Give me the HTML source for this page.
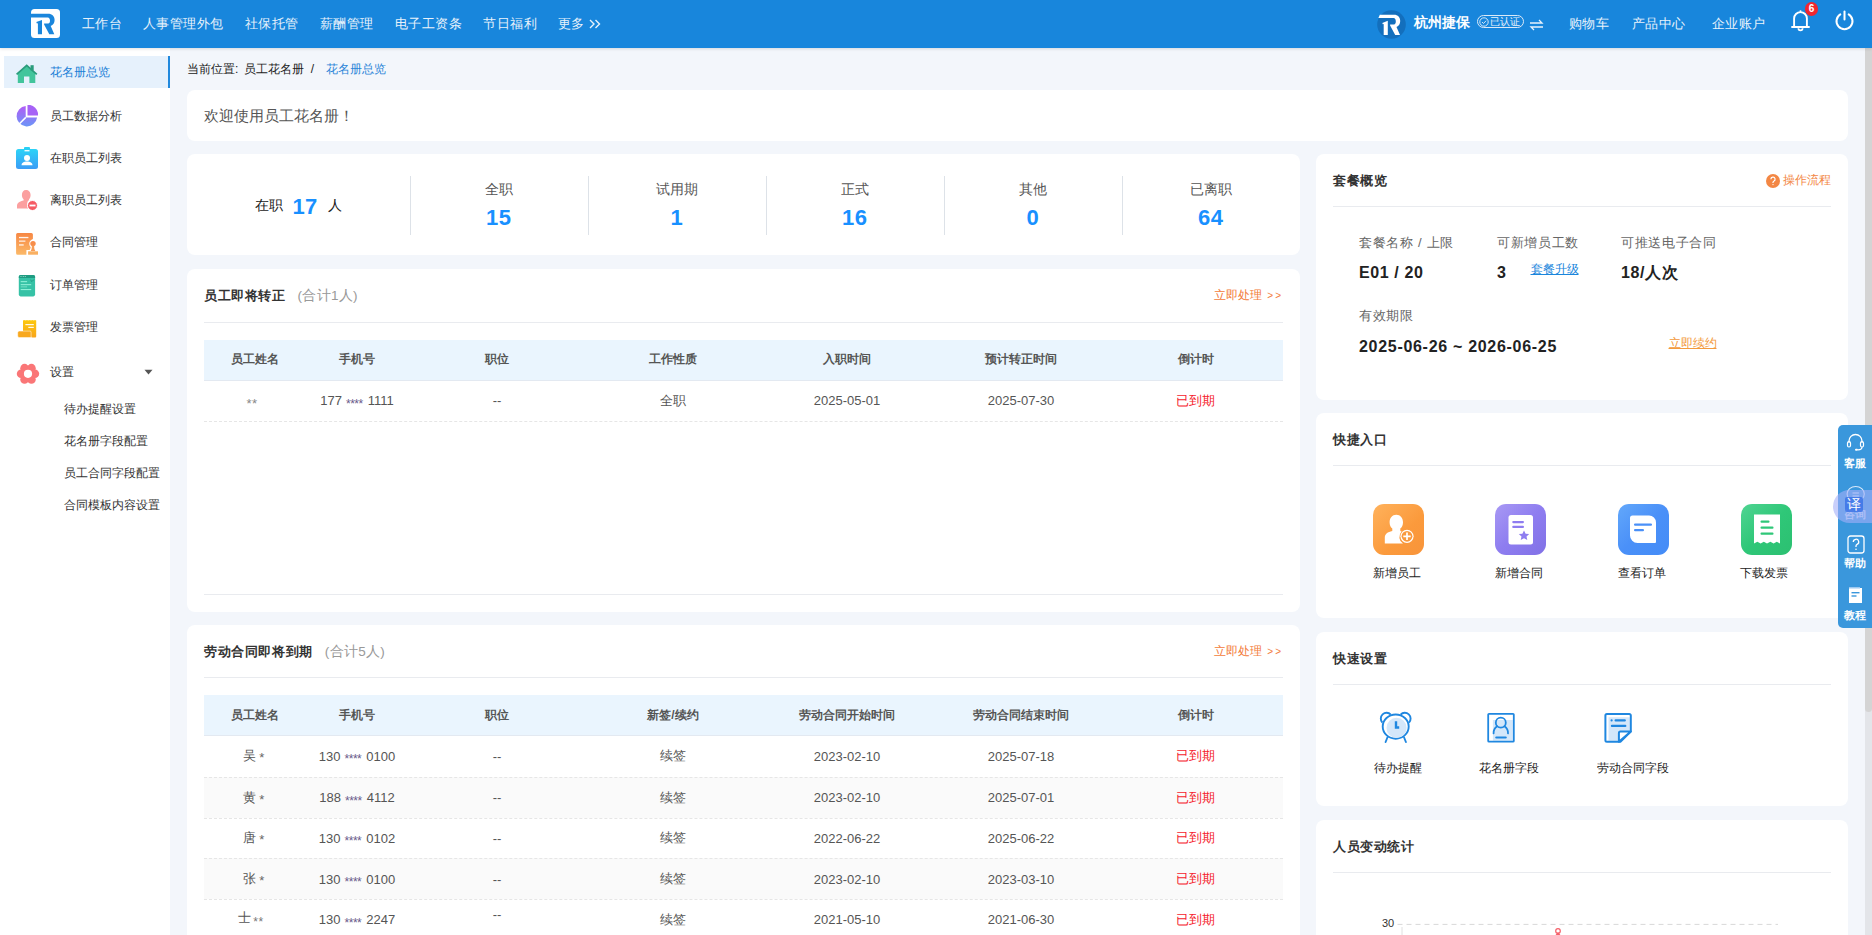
<!DOCTYPE html><html><head><meta charset="utf-8"><style>
*{box-sizing:border-box;margin:0;padding:0}
html,body{width:1872px;height:935px;overflow:hidden}
body{font-family:"Liberation Sans",sans-serif;background:#f3f6fb;position:relative;color:#333}
.abs{position:absolute}
.t{position:absolute;white-space:nowrap}
#hdr{position:absolute;left:0;top:0;width:1872px;height:48px;background:#1886dc;color:#fff;box-shadow:0 1px 3px rgba(0,0,0,0.12);z-index:5}
#hdr .nav{position:absolute;top:0;height:48px;line-height:47px;font-size:13px;letter-spacing:0.6px;white-space:nowrap;color:#e8f2fb}
#side{position:absolute;left:0;top:48px;width:170px;height:887px;background:#fff}
.mi{position:absolute;left:4px;width:166px;height:32px;font-size:12px;color:#333;line-height:32px}
.mi svg{position:absolute;left:12px;top:5px}
.mi .tx{position:absolute;left:46px;top:0}
.mi.act{background:#e6f1fc;color:#1b7fd6}
.mi.act:after{content:"";position:absolute;right:0;top:0;width:2px;height:32px;background:#2189dd}
.sub{position:absolute;left:64px;font-size:12px;color:#333;line-height:20px;white-space:nowrap}
.card{position:absolute;background:#fff;border-radius:8px;overflow:hidden}
.ttl{position:absolute;left:17px;font-size:13px;font-weight:bold;color:#333;line-height:20px;white-space:nowrap;letter-spacing:0.6px;margin-top:1px}
.ttl .cnt{font-weight:normal;color:#999;margin-left:12px;font-size:13.5px;letter-spacing:0.3px}
.dv{position:absolute;left:17px;right:17px;height:1px;background:#e9ebef}
.more{position:absolute;right:17px;font-size:12px;color:#f37b3a;line-height:20px;white-space:nowrap}
.tbl{position:absolute;left:17px;width:1079px}
.th{position:absolute;left:0;width:1079px;height:40.5px;background:#eaf5fe;border-bottom:1px solid #e3e9f1}
.tr{position:absolute;left:0;width:1079px;height:41.25px;border-bottom:1px dashed #e6e6e6}
.tr.alt{background:#fafafa}
.c{position:absolute;top:0;height:100%;display:flex;align-items:center;justify-content:center;font-size:13px;color:#555;white-space:nowrap}
.th .c{font-weight:bold;color:#555;font-size:12px}
.red{color:#f5222d!important}
.stat{position:absolute;top:0;height:101px}
.sdiv{position:absolute;top:22px;width:1px;height:59px;background:#dde2e8}
.slab{position:absolute;left:0;right:0;text-align:center;font-size:13.5px;color:#555;top:25.5px;line-height:20px}
.snum{position:absolute;left:0;right:0;text-align:center;font-size:22px;letter-spacing:0.3px;text-indent:0.3px;font-weight:bold;color:#1890ff;top:50.5px;line-height:26px}
.lab{position:absolute;font-size:13px;color:#666;line-height:20px;white-space:nowrap;letter-spacing:0.7px;margin-top:1.5px}
.val{position:absolute;font-size:16px;font-weight:bold;color:#222;line-height:22px;white-space:nowrap;letter-spacing:0.6px;margin-top:1.5px}
.qi{position:absolute;width:51px;height:51px;border-radius:11px}
.ql{position:absolute;font-size:12px;color:#222;line-height:20px;white-space:nowrap;text-align:center;width:100px}
#sb{position:absolute;left:1865px;top:48px;width:7px;height:887px;background:#e3e5e9}
#sbt{position:absolute;left:1865px;top:48px;width:7px;height:664px;background:#d4d4d4;border-radius:0 0 4px 4px}
#ftb{position:absolute;left:1838px;top:425px;width:40px;height:203px;background:#3a97dc;border-radius:5px}
.fl{position:absolute;left:0;width:34px;text-align:center;font-size:10.5px;color:#fff;line-height:14px;font-weight:bold}
</style></head><body>
<div id="hdr">
<svg class="abs" style="left:31px;top:9px" width="29" height="29" viewBox="0 0 29 29"><rect width="29" height="29" rx="3.5" fill="#fff"/><path d="M0 4.7H17C21.2 4.7 23.6 7.3 23.6 11.1C23.6 14 22.2 16.1 19.7 17.1L23.3 25.3H18.3L13.1 15.6V14.6H17.2C18.4 14.6 19 13.4 19 11.6C19 9.7 18.2 8.4 16.8 8.4H0Z" fill="#1a86dc"/><path d="M6.9 25.3H11V10.9L5.3 13.1L5.9 14.5L6.9 14.3Z" fill="#1a86dc"/></svg>
<div class="nav" style="left:81.5px">工作台</div>
<div class="nav" style="left:142.5px">人事管理外包</div>
<div class="nav" style="left:244.5px">社保托管</div>
<div class="nav" style="left:319.5px">薪酬管理</div>
<div class="nav" style="left:394.5px">电子工资条</div>
<div class="nav" style="left:483px">节日福利</div>
<div class="nav" style="left:557.5px">更多</div>
<svg class="abs" style="left:588.5px;top:18.5px" width="12" height="10" viewBox="0 0 12 10"><path d="M1 1l4 4l-4 4M6.5 1l4 4l-4 4" stroke="#e8f2fb" stroke-width="1.4" fill="none"/></svg>
<svg class="abs" style="left:1377px;top:10px" width="29" height="29" viewBox="0 0 29 29"><circle cx="14.5" cy="14.5" r="14.3" fill="#136fbd"/><path d="M2.8 4.7H17C21 4.7 23.2 7.3 23.2 11C23.2 13.9 21.9 16 19.5 17L23 24.9H18.2L13.1 15.4V14.4H17C18.2 14.4 18.8 13.2 18.8 11.5C18.8 9.7 18 8.1 16.6 8.1H1.4Z" fill="#fff"/><path d="M6.7 24.9H10.8V10.8L5.3 12.9L5.8 14.3L6.7 14.1Z" fill="#fff"/></svg>
<div class="t" style="left:1414px;top:0;line-height:46px;font-size:13.5px;font-weight:bold;color:#fff">杭州捷保</div>
<div class="abs" style="left:1477px;top:15px;width:47px;height:13px;border:1px solid #dbe9f7;border-radius:7px"></div>
<svg class="abs" style="left:1479px;top:16.5px" width="10" height="10" viewBox="0 0 10 10"><circle cx="5" cy="5" r="4.2" stroke="#e8f2fb" stroke-width="0.9" fill="none"/><path d="M3 5l1.5 1.5l2.6-2.8" stroke="#e8f2fb" stroke-width="0.9" fill="none"/></svg>
<div class="t" style="left:1490px;top:14px;line-height:15px;font-size:10px;color:#e8f2fb">已认证</div>
<svg class="abs" style="left:1529px;top:19px" width="15" height="12" viewBox="0 0 15 12"><path d="M1 4h12l-3-3M14 8H2l3 3" stroke="#e8f2fb" stroke-width="1.3" fill="none"/></svg>
<div class="nav" style="left:1568.5px">购物车</div>
<div class="nav" style="left:1631.5px">产品中心</div>
<div class="nav" style="left:1711.5px">企业账户</div>
<svg class="abs" style="left:1790px;top:9px" width="21" height="23" viewBox="0 0 21 23"><path d="M4.1 18V9.5A6.4 6.4 0 0 1 16.9 9.5V18" stroke="#fff" stroke-width="1.9" fill="none"/><path d="M1.3 18H19.7" stroke="#fff" stroke-width="2"/><path d="M8.4 19.2a2.1 2.1 0 0 0 4.2 0" stroke="#fff" stroke-width="1.7" fill="none"/><path d="M10.5 1.3v2" stroke="#fff" stroke-width="1.6"/></svg>
<div class="abs" style="left:1805px;top:2px;width:13px;height:14px;border-radius:7px;background:#f0262f;color:#fff;font-size:10px;font-weight:bold;line-height:14px;text-align:center">6</div>
<svg class="abs" style="left:1834px;top:10px" width="21" height="21" viewBox="0 0 21 21"><path d="M6.3 4.4a8 8 0 1 0 8.4 0" stroke="#fff" stroke-width="2" fill="none" stroke-linecap="round"/><path d="M10.5 1.5v8" stroke="#fff" stroke-width="2" stroke-linecap="round"/></svg>
</div>
<div id="side">
<div class="mi act" style="top:8px"><svg width="22" height="22" viewBox="0 0 22 22"><path d="M1.8 12.3L10.7 4.6L19.3 12.3V23H13.4V15.6H8V23H1.8Z" fill="#43c59c"/><path d="M0.6 13.4L10.7 4.4L20.8 13.4" stroke="#2b9c7c" stroke-width="1.8" fill="none"/><rect x="14.5" y="4.2" width="3.2" height="5.2" fill="#2b9c7c"/></svg><span class="tx">花名册总览</span></div>
<div class="mi" style="top:51.5px"><svg width="22" height="22" viewBox="0 0 22 22"><defs><linearGradient id="gp" x1="0" y1="0" x2="0" y2="1"><stop offset="0" stop-color="#b25cf6"/><stop offset="1" stop-color="#6b95f7"/></linearGradient></defs><path d="M9.7 0.9A10.3 10.3 0 1 0 21.1 12.6H9.7z" fill="url(#gp)"/><path d="M11.5 -0.3A10.6 10.6 0 0 1 22.2 10.6H11.5z" fill="#a662f6"/><path d="M9.8 12.4L3.2 19" stroke="#fff" stroke-width="1.5"/></svg><span class="tx">员工数据分析</span></div>
<div class="mi" style="top:93.5px"><svg width="22" height="22" viewBox="0 0 22 22"><defs><linearGradient id="gb" x1="0" y1="0" x2="0" y2="1"><stop offset="0" stop-color="#2dd3f7"/><stop offset="1" stop-color="#3b9cf6"/></linearGradient></defs><rect x="0" y="2" width="22" height="20" rx="2.5" fill="url(#gb)"/><rect x="8" y="0" width="6" height="4" rx="1" fill="#2ad0f5"/><path d="M11 2.5v0" /><rect x="8.5" y="3" width="5" height="1.4" fill="#fff" opacity=".9"/><circle cx="11" cy="11" r="3" fill="#fff"/><path d="M5.5 18.3c0-2.6 2.4-3.8 5.5-3.8s5.5 1.2 5.5 3.8z" fill="#fff"/></svg><span class="tx">在职员工列表</span></div>
<div class="mi" style="top:136px"><svg width="22" height="22" viewBox="0 0 22 22"><path d="M10 1c-2.6 0-4.1 2.1-4.1 4.9c0 1.8.7 3.4 1.7 4.3v1.2C4 12.3 1 13.8 1 16.5V19.5h11.5a6 6 0 0 1 .5-8.5v-.8c1-.9 1.6-2.5 1.6-4.3C14.6 3.1 12.6 1 10 1z" fill="#fba0a0"/><circle cx="16.5" cy="16.5" r="5" fill="#f55b64" stroke="#fff" stroke-width="1"/><rect x="13.5" y="15.6" width="6" height="1.8" fill="#fff"/></svg><span class="tx">离职员工列表</span></div>
<div class="mi" style="top:178px"><svg width="22" height="26" viewBox="0 0 22 26"><defs><linearGradient id="gc" x1="0" y1="0" x2="0" y2="1"><stop offset="0" stop-color="#f78744"/><stop offset="1" stop-color="#fbb968"/></linearGradient></defs><path d="M1.6 2H15.4A1.5 1.5 0 0 1 16.9 3.5V8C15 8.5 13.3 10.5 13.3 12.6C13.3 14.2 14 15.6 14.8 16.4L13.7 19H10.4V23.7H1.6A1.5 1.5 0 0 1 0.1 22.2V3.5A1.5 1.5 0 0 1 1.6 2Z" fill="url(#gc)"/><rect x="3" y="5.9" width="9.4" height="1.3" fill="#fff" opacity=".9"/><rect x="3" y="9.5" width="6.4" height="1.3" fill="#fff" opacity=".8"/><rect x="3" y="13.3" width="4.7" height="1.3" fill="#fff" opacity=".9"/><circle cx="17" cy="12.6" r="2.7" fill="#f78d4a"/><path d="M15.8 14.5C16 16.5 15.6 18.5 14.7 19.9H19.3C18.4 18.5 18 16.5 18.2 14.5Z" fill="#f89c55"/><rect x="12.1" y="20.3" width="9.9" height="3.4" fill="#f9b062"/></svg><span class="tx">合同管理</span></div>
<div class="mi" style="top:221px"><svg width="22" height="24" viewBox="0 0 22 24"><rect x="2.8" y="1" width="16.3" height="21.4" rx="1.8" fill="#36c2a6"/><path d="M2.8 2.8A1.8 1.8 0 0 1 4.6 1H17.3A1.8 1.8 0 0 1 19.1 2.8V3.9H2.8Z" fill="#1f9b81"/><circle cx="5" cy="2.5" r=".5" fill="#bfeee2"/><circle cx="7.2" cy="2.5" r=".5" fill="#bfeee2"/><circle cx="9.2" cy="2.5" r=".5" fill="#bfeee2"/><path d="M14.4 6l1.6 1.5l2-2" stroke="#1f9b81" stroke-width="1" fill="none"/><rect x="4.7" y="7.1" width="6.4" height="1.1" fill="#8ff0d8"/><rect x="4.7" y="10.1" width="10.5" height="1.1" fill="#8ff0d8"/><rect x="4.7" y="12.3" width="6.4" height="1.1" fill="#70dcc2"/><rect x="4.7" y="15" width="10.5" height="1.1" fill="#8ff0d8"/></svg><span class="tx">订单管理</span></div>
<div class="mi" style="top:263px"><svg width="22" height="24" viewBox="0 0 22 24"><defs><linearGradient id="gi" x1="0" y1="0" x2="0" y2="1"><stop offset="0" stop-color="#fcc80c"/><stop offset="1" stop-color="#f8a51c"/></linearGradient></defs><path d="M7 4.1L7.8 4.6L8.6 4.1L9.4 4.6L10.2 4.1L11 4.6L11.8 4.1L12.6 4.6L13.4 4.1L14.2 4.6L15 4.1L15.8 4.6L16.6 4.1L17.4 4.6L18.2 4.1L19 4.6L19.8 4.1L20.2 4.4V20.6A1 1 0 0 1 19.2 21.6H16.3A1.3 1.3 0 0 1 15 20.3V15.1H7Z" fill="url(#gi)"/><rect x="9.4" y="8" width="8.4" height="1.2" fill="#fff" opacity=".9"/><rect x="12.3" y="10.8" width="5.5" height="1.2" fill="#fff" opacity=".9"/><path d="M3.3 15.1H14.3A1 1 0 0 1 15.1 16V21.6H3.3A1.6 1.6 0 0 1 1.7 20V16.7A1.6 1.6 0 0 1 3.3 15.1Z" fill="#f8a81e" stroke="#fff" stroke-width=".5"/></svg><span class="tx">发票管理</span></div>
<div class="mi" style="top:308px"><svg width="24" height="24" viewBox="0 0 24 24"><circle cx="12" cy="12.8" r="8" fill="#fa7677"/><circle cx="18.90" cy="12.80" r="4.3" fill="#fa7677"/><circle cx="15.45" cy="18.43" r="4.3" fill="#fa7677"/><circle cx="8.55" cy="18.43" r="4.3" fill="#fa7677"/><circle cx="5.10" cy="12.80" r="4.3" fill="#fa7677"/><circle cx="8.55" cy="7.17" r="4.3" fill="#fa7677"/><circle cx="15.45" cy="7.17" r="4.3" fill="#fa7677"/><circle cx="12" cy="12.8" r="4.1" fill="#fff"/></svg><span class="tx">设置</span></div>
<svg class="abs" style="left:144px;top:321px" width="9" height="6" viewBox="0 0 9 6"><path d="M0.5 0.8h8l-4 4.6z" fill="#555"/></svg>
<div class="sub" style="top:351px">待办提醒设置</div>
<div class="sub" style="top:383px">花名册字段配置</div>
<div class="sub" style="top:415px">员工合同字段配置</div>
<div class="sub" style="top:447px">合同模板内容设置</div>
</div>
<div class="t" style="left:187px;top:59px;line-height:20px;font-size:12px;color:#222">当前位置: <span style="margin-left:2px">员工花名册</span><span style="margin:0 12px 0 7px">/</span><span style="color:#2b85d8">花名册总览</span></div>
<div class="card" style="left:187px;top:90px;width:1661px;height:51px"><div class="t" style="left:17px;top:14.5px;line-height:22px;font-size:15px;color:#555">欢迎使用员工花名册！</div></div>
<div class="card" style="left:187px;top:154px;width:1113px;height:101px">
<div class="t" style="left:67.5px;top:36px;line-height:26px;font-size:14px;color:#222">在职<span style="font-size:22px;font-weight:bold;color:#1890ff;margin:0 10px 0 10px;position:relative;top:3.5px;letter-spacing:0.3px">17</span>人</div>
<div class="sdiv" style="left:222.5px"></div>
<div class="stat" style="left:222.5px;width:178px"><div class="slab">全职</div><div class="snum">15</div></div>
<div class="sdiv" style="left:400.5px"></div>
<div class="stat" style="left:400.5px;width:178px"><div class="slab">试用期</div><div class="snum">1</div></div>
<div class="sdiv" style="left:578.5px"></div>
<div class="stat" style="left:578.5px;width:178px"><div class="slab">正式</div><div class="snum">16</div></div>
<div class="sdiv" style="left:756.5px"></div>
<div class="stat" style="left:756.5px;width:178px"><div class="slab">其他</div><div class="snum">0</div></div>
<div class="sdiv" style="left:934.5px"></div>
<div class="stat" style="left:934.5px;width:178px"><div class="slab">已离职</div><div class="snum">64</div></div>
</div>
<div class="card" style="left:187px;top:269px;width:1113px;height:343px">
<div class="ttl" style="top:16px">员工即将转正<span class="cnt">(合计1人)</span></div>
<div class="more" style="top:16px">立即处理<span style="font-size:10px;margin-left:5px;letter-spacing:2px">&gt;&gt;</span></div>
<div class="dv" style="top:53px"></div>
<div class="tbl" style="top:71px;height:255px">
<div class="th" style="top:0px"><div class="c" style="left:0px;width:102px">员工姓名</div><div class="c" style="left:102px;width:102px">手机号</div><div class="c" style="left:204px;width:178px">职位</div><div class="c" style="left:382px;width:174px">工作性质</div><div class="c" style="left:556px;width:174px">入职时间</div><div class="c" style="left:730px;width:174px">预计转正时间</div><div class="c" style="left:904px;width:175px">倒计时</div></div>
<div class="tr" style="top:40.5px;height:41.5px"><div class="c" style="left:0px;width:102px"><span style="position:relative;top:3px;left:-3px;color:#888;letter-spacing:0.5px">**</span></div><div class="c" style="left:102px;width:102px">177<span style="font-size:12px;letter-spacing:-0.5px;margin:0 5px 0 4px;position:relative;top:3px;color:#6a5a8a">****</span>1111</div><div class="c" style="left:204px;width:178px">--</div><div class="c" style="left:382px;width:174px">全职</div><div class="c" style="left:556px;width:174px">2025-05-01</div><div class="c" style="left:730px;width:174px">2025-07-30</div><div class="c red" style="left:904px;width:175px">已到期</div></div>
<div class="abs" style="left:0;top:254px;width:1079px;height:1px;background:#e9ebef"></div>
</div></div>
<div class="card" style="left:187px;top:625px;width:1113px;height:330px">
<div class="ttl" style="top:16px">劳动合同即将到期<span class="cnt">(合计5人)</span></div>
<div class="more" style="top:16px">立即处理<span style="font-size:10px;margin-left:5px;letter-spacing:2px">&gt;&gt;</span></div>
<div class="dv" style="top:52px"></div>
<div class="tbl" style="top:70px;height:260px">
<div class="th" style="top:0px;height:41px"><div class="c" style="left:0px;width:102px">员工姓名</div><div class="c" style="left:102px;width:102px">手机号</div><div class="c" style="left:204px;width:178px">职位</div><div class="c" style="left:382px;width:174px">新签/续约</div><div class="c" style="left:556px;width:174px">劳动合同开始时间</div><div class="c" style="left:730px;width:174px">劳动合同结束时间</div><div class="c" style="left:904px;width:175px">倒计时</div></div>
<div class="tr" style="top:41.0px;height:40.75px;border-bottom:none;"><div class="c" style="left:0px;width:102px"><span style="position:relative;left:-1.3px">吴<span style="margin-left:3px;position:relative;top:2px;color:#666">*</span></span></div><div class="c" style="left:102px;width:102px">130<span style="font-size:12px;letter-spacing:-0.5px;margin:0 5px 0 4px;position:relative;top:3px;color:#6a5a8a">****</span>0100</div><div class="c" style="left:204px;width:178px">--</div><div class="c" style="left:382px;width:174px">续签</div><div class="c" style="left:556px;width:174px">2023-02-10</div><div class="c" style="left:730px;width:174px">2025-07-18</div><div class="c red" style="left:904px;width:175px">已到期</div></div>
<div class="tr alt" style="top:81.75px;height:40.75px;border-bottom:none;border-top:1px dashed #e6e6e6"><div class="c" style="left:0px;width:102px"><span style="position:relative;left:-1.3px">黄<span style="margin-left:3px;position:relative;top:2px;color:#666">*</span></span></div><div class="c" style="left:102px;width:102px">188<span style="font-size:12px;letter-spacing:-0.5px;margin:0 5px 0 4px;position:relative;top:3px;color:#6a5a8a">****</span>4112</div><div class="c" style="left:204px;width:178px">--</div><div class="c" style="left:382px;width:174px">续签</div><div class="c" style="left:556px;width:174px">2023-02-10</div><div class="c" style="left:730px;width:174px">2025-07-01</div><div class="c red" style="left:904px;width:175px">已到期</div></div>
<div class="tr" style="top:122.5px;height:40.75px;border-bottom:none;border-top:1px dashed #e6e6e6"><div class="c" style="left:0px;width:102px"><span style="position:relative;left:-1.3px">唐<span style="margin-left:3px;position:relative;top:2px;color:#666">*</span></span></div><div class="c" style="left:102px;width:102px">130<span style="font-size:12px;letter-spacing:-0.5px;margin:0 5px 0 4px;position:relative;top:3px;color:#6a5a8a">****</span>0102</div><div class="c" style="left:204px;width:178px">--</div><div class="c" style="left:382px;width:174px">续签</div><div class="c" style="left:556px;width:174px">2022-06-22</div><div class="c" style="left:730px;width:174px">2025-06-22</div><div class="c red" style="left:904px;width:175px">已到期</div></div>
<div class="tr alt" style="top:163.25px;height:40.75px;border-bottom:none;border-top:1px dashed #e6e6e6"><div class="c" style="left:0px;width:102px"><span style="position:relative;left:-1.3px">张<span style="margin-left:3px;position:relative;top:2px;color:#666">*</span></span></div><div class="c" style="left:102px;width:102px">130<span style="font-size:12px;letter-spacing:-0.5px;margin:0 5px 0 4px;position:relative;top:3px;color:#6a5a8a">****</span>0100</div><div class="c" style="left:204px;width:178px">--</div><div class="c" style="left:382px;width:174px">续签</div><div class="c" style="left:556px;width:174px">2023-02-10</div><div class="c" style="left:730px;width:174px">2023-03-10</div><div class="c red" style="left:904px;width:175px">已到期</div></div>
<div class="tr" style="top:204.0px;height:40.75px;border-bottom:none;border-top:1px dashed #e6e6e6"><div class="c" style="left:0px;width:102px"><span style="position:relative;left:-4px;top:-1.5px">士<span style="margin-left:2px;letter-spacing:0.5px;position:relative;top:3.5px;font-size:12px;color:#777">**</span></span></div><div class="c" style="left:102px;width:102px">130<span style="font-size:12px;letter-spacing:-0.5px;margin:0 5px 0 4px;position:relative;top:3px;color:#6a5a8a">****</span>2247</div><div class="c" style="left:204px;width:178px"><span style="position:relative;top:-5px">--</span></div><div class="c" style="left:382px;width:174px">续签</div><div class="c" style="left:556px;width:174px">2021-05-10</div><div class="c" style="left:730px;width:174px">2021-06-30</div><div class="c red" style="left:904px;width:175px">已到期</div></div>
</div></div>
<div class="card" style="left:1316px;top:154px;width:532px;height:246px">
<div class="ttl" style="top:16px">套餐概览</div>
<svg class="abs" style="left:450px;top:20px" width="14" height="14" viewBox="0 0 14 14"><circle cx="7" cy="7" r="7" fill="#f38744"/><path d="M4.9 5.3a2.1 2.1 0 1 1 2.9 1.9c-.6.3-.8.6-.8 1.3v.6" stroke="#fff" stroke-width="1.2" fill="none"/><circle cx="7" cy="10.6" r=".7" fill="#fff"/></svg>
<div class="t" style="left:467px;top:16px;line-height:20px;font-size:12px;color:#f38744">操作流程</div>
<div class="dv" style="top:52px"></div>
<div class="lab" style="left:43px;top:77px">套餐名称 / 上限</div>
<div class="lab" style="left:181px;top:77px">可新增员工数</div>
<div class="lab" style="left:305px;top:77px">可推送电子合同</div>
<div class="val" style="left:43px;top:106px">E01 / 20</div>
<div class="val" style="left:181px;top:106px">3</div>
<div class="t" style="left:214.5px;top:105px;line-height:20px;font-size:12px;color:#1a86dc;text-decoration:underline">套餐升级</div>
<div class="val" style="left:305px;top:106px">18/人次</div>
<div class="lab" style="left:43px;top:150px">有效期限</div>
<div class="val" style="left:43px;top:180px;letter-spacing:0.7px">2025-06-26 ~ 2026-06-25</div>
<div class="t" style="left:352.5px;top:179px;line-height:20px;font-size:12px;color:#f39a3c;text-decoration:underline">立即续约</div>
</div>
<div class="card" style="left:1316px;top:413px;width:532px;height:205px">
<div class="ttl" style="top:16px">快捷入口</div>
<div class="dv" style="top:52px"></div>
<div class="qi" style="left:57.0px;top:91px;background:linear-gradient(135deg,#ffb25c,#fb9a3c 60%,#f8943a)"><svg width="51" height="51" viewBox="0 0 51 51"><path d="M23.3 10.8C19.2 10.8 16.6 14 16.6 18.2C16.6 20.9 17.6 23.2 19.3 24.6V27C14.6 28 11.8 30 11.8 33.5V39.6H30A7.8 7.8 0 0 1 28.6 27.5L27.3 27V24.6C29 23.2 30 20.9 30 18.2C30 14 27.4 10.8 23.3 10.8Z" fill="#fff"/><circle cx="34" cy="32.3" r="6.6" fill="#fff"/><circle cx="34" cy="32.3" r="5.4" fill="#f99a3e"/><path d="M34 28.6v7.4M30.3 32.3h7.4" stroke="#fff" stroke-width="1.7"/></svg></div>
<div class="ql" style="left:30.5px;top:150px">新增员工</div>
<div class="qi" style="left:179.0px;top:91px;background:linear-gradient(135deg,#a899f4,#8e7df0 50%,#8171e6)"><svg width="51" height="51" viewBox="0 0 51 51"><rect x="13.5" y="11" width="24.5" height="29.5" rx="2.5" fill="#fff"/><rect x="17.2" y="17" width="11.8" height="2.2" rx="1.1" fill="#8e7df0"/><rect x="17.2" y="21.8" width="11.8" height="2.2" rx="1.1" fill="#8e7df0"/><path d="M29 26.4l1.6 3.3l3.6.4l-2.7 2.4l.8 3.6l-3.3-1.9l-3.3 1.9l.8-3.6l-2.7-2.4l3.6-.4z" fill="#8e7df0"/></svg></div>
<div class="ql" style="left:152.5px;top:150px">新增合同</div>
<div class="qi" style="left:302.0px;top:91px;background:linear-gradient(135deg,#63a8fb,#4a90f8 50%,#448cf7)"><svg width="51" height="51" viewBox="0 0 51 51"><path d="M12 14a2.5 2.5 0 0 1 2.5-2.5h16.5a7 7 0 0 1 7 7v19.5a1 1 0 0 1-1 1h-17.5a7.5 7.5 0 0 1-7.5-7.5z" fill="#fff"/><rect x="16" y="19.5" width="18" height="2.3" rx="1.1" fill="#4a90f8"/><rect x="16" y="25" width="10" height="2.3" rx="1.1" fill="#4a90f8"/></svg></div>
<div class="ql" style="left:275.5px;top:150px">查看订单</div>
<div class="qi" style="left:424.9px;top:91px;background:linear-gradient(135deg,#4fd492,#2fc778 50%,#2cc071)"><svg width="51" height="51" viewBox="0 0 51 51"><path d="M13 10.5h26v29l-3.2-1.8l-3.2 1.8l-3.2-1.8l-3.4 1.8l-3.2-1.8l-3.2 1.8l-3.2-1.8L13 39.5z" fill="#fff"/><rect x="19.5" y="16.5" width="9" height="2.2" rx="1" fill="#2fc778"/><rect x="19.5" y="22.5" width="13" height="2.2" rx="1" fill="#2fc778"/><rect x="19.5" y="28.5" width="13" height="2.2" rx="1" fill="#2fc778"/></svg></div>
<div class="ql" style="left:398.4px;top:150px">下载发票</div>
</div>
<div class="card" style="left:1316px;top:632px;width:532px;height:174px">
<div class="ttl" style="top:16px">快速设置</div>
<div class="dv" style="top:52px"></div>
<div class="abs" style="left:63px;top:80px"><svg style="position:absolute;left:-4px;top:-4px" width="45" height="40" viewBox="0 0 45 40"><path d="M7.4 14.6A5.8 5.8 0 0 1 15.8 6.6" stroke="#1f87e0" stroke-width="1.9" fill="none"/><path d="M25.6 6.6A5.8 5.8 0 0 1 34 14.6" stroke="#1f87e0" stroke-width="1.9" fill="none"/><ellipse cx="20.7" cy="18.6" rx="13" ry="12.1" stroke="#1f87e0" stroke-width="1.9" fill="#fff"/><circle cx="21.6" cy="19.9" r="10.1" fill="#d4e7fa"/><path d="M12.4 29.5L10.6 34M29.1 29.5L30.9 34" stroke="#1f87e0" stroke-width="1.9" stroke-linecap="round"/><path d="M21 13.3V19.5H24.2" stroke="#1f87e0" stroke-width="2.4" fill="none"/></svg></div>
<div class="abs" style="left:169px;top:80px"><svg width="32" height="32" viewBox="0 0 32 32"><rect x="7.9" y="8" width="19.9" height="20.7" fill="#d4e7fa"/><rect x="3.2" y="1.8" width="25.6" height="27.9" rx="0.8" fill="none" stroke="#1f87e0" stroke-width="1.8"/><circle cx="15.8" cy="10.7" r="5" fill="none" stroke="#1f87e0" stroke-width="1.8"/><path d="M8.6 21.4A8 8 0 0 1 12.2 14.2M19.4 14.2A8 8 0 0 1 23 21.4" stroke="#1f87e0" stroke-width="1.8" fill="none" stroke-linecap="round"/><rect x="10.2" y="24.4" width="11.6" height="2.2" rx="1.1" fill="#1f87e0"/></svg></div>
<div class="abs" style="left:286px;top:80px"><svg width="32" height="32" viewBox="0 0 32 32"><path d="M6.5 5.2H27.8V19.5H17.5V28.8H6.5Z" fill="#d4e7fa"/><path d="M3.4 3.4A1.5 1.5 0 0 1 4.9 1.9H27.3A1.5 1.5 0 0 1 28.8 3.4V19.5L18.4 29.8H4.9A1.5 1.5 0 0 1 3.4 28.3Z" fill="none" stroke="#1f87e0" stroke-width="2" stroke-linejoin="round"/><path d="M28.8 19.5H18.4A1.5 1.5 0 0 0 16.9 21V29.8Z" fill="#fff" stroke="#1f87e0" stroke-width="2" stroke-linejoin="round"/><circle cx="9.6" cy="8.4" r="1.1" fill="#1f87e0"/><path d="M13.6 8.4H22.8M9.9 13.9H23.3" stroke="#1f87e0" stroke-width="2.2" stroke-linecap="round"/></svg></div>
<div class="ql" style="left:32px;top:126px">待办提醒</div>
<div class="ql" style="left:143.4px;top:126px">花名册字段</div>
<div class="ql" style="left:266.6px;top:126px">劳动合同字段</div>
</div>
<div class="card" style="left:1316px;top:820px;width:532px;height:200px">
<div class="ttl" style="top:16px">人员变动统计</div>
<div class="dv" style="top:52px"></div>
<div class="t" style="left:66px;top:96px;font-size:11px;color:#333;line-height:14px">30</div>
<svg class="abs" style="left:80px;top:100px" width="385" height="20" viewBox="0 0 385 20"><path d="M1.5 4.4H382" stroke="#d8d8d8" stroke-width="1" stroke-dasharray="5 4"/><path d="M6 7v13" stroke="#e0e0e0"/><circle cx="162" cy="11" r="2.3" fill="none" stroke="#f5606a" stroke-width="1.2"/><path d="M159.5 16l2.5-3l2.5 3" stroke="#f5606a" stroke-width="1.2" fill="none"/></svg>
</div>
<div id="sb"></div><div id="sbt"></div>
<div id="ftb">
<svg class="abs" style="left:8px;top:7px" width="19" height="19" viewBox="0 0 19 19"><path d="M3 11V9a6.5 6.5 0 0 1 13 0v2" stroke="#fff" stroke-width="1.3" fill="none"/><rect x="1.5" y="9.5" width="3" height="5.5" rx="1.5" fill="none" stroke="#fff" stroke-width="1.2"/><rect x="14.5" y="9.5" width="3" height="5.5" rx="1.5" fill="none" stroke="#fff" stroke-width="1.2"/><path d="M16 15c0 1.8-1.5 2.8-4 2.8" stroke="#fff" stroke-width="1.2" fill="none"/><rect x="9" y="16.8" width="3" height="2" rx="1" fill="#fff"/></svg>
<div class="fl" style="top:31px">客服</div>
<svg class="abs" style="left:8px;top:60px" width="20" height="26" viewBox="0 0 20 26"><ellipse cx="9.7" cy="9" rx="8.6" ry="7.5" stroke="#d8e8fb" stroke-width="1.1" fill="none"/><path d="M6.5 8h6.4M6.5 11h6.4" stroke="#d8e8fb" stroke-width="1"/></svg>
<div class="fl" style="top:82px;color:#b9d4f4">咨询</div>
<svg class="abs" style="left:9px;top:110px" width="18" height="19" viewBox="0 0 18 19"><rect x="1" y="1" width="16" height="17" rx="2.5" stroke="#fff" stroke-width="1.3" fill="none"/><path d="M6.3 7a2.7 2.7 0 1 1 3.8 2.4c-.7.4-1.1.8-1.1 1.7v1" stroke="#fff" stroke-width="1.3" fill="none"/><circle cx="9" cy="14.3" r=".8" fill="#fff"/></svg>
<div class="fl" style="top:131px">帮助</div>
<svg class="abs" style="left:10px;top:162px" width="15" height="17" viewBox="0 0 15 17"><path d="M1 1h13v15H1z" fill="#fff"/><rect x="1" y="0" width="11" height="1.5" fill="#9cc8f0"/><rect x="3.5" y="5" width="8" height="1.4" fill="#3a97dc"/><rect x="3.5" y="8.3" width="5" height="1.4" fill="#3a97dc"/></svg>
<div class="fl" style="top:183px">教程</div>
</div>
<div class="abs" style="left:1833px;top:489.5px;width:56px;height:33.5px;border-radius:17px;background:rgba(165,175,248,0.6)"></div>
<div class="abs" style="left:1845px;top:497px;width:18px;height:15px;border-radius:2px;background:rgba(60,115,230,0.85);color:#fff;font-size:14px;line-height:15px;text-align:center">译</div>
</body></html>
